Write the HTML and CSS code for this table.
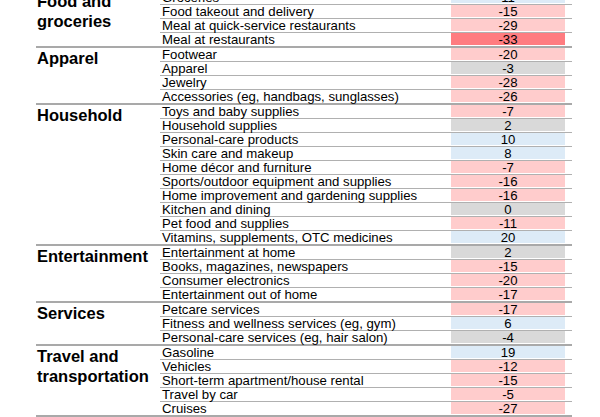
FILE: index.html
```html
<!DOCTYPE html>
<html>
<head>
<meta charset="utf-8">
<link rel="stylesheet" href="styles.css">
</head>
<body>
<div class="table">
  <section class="group">
    <div class="cat">Food and<br>groceries</div>
    <div class="rows">
      <div class="row"><span class="name">Groceries</span><span class="val pos">11</span></div>
      <div class="row"><span class="name">Food takeout and delivery</span><span class="val neg">-15</span></div>
      <div class="row"><span class="name">Meal at quick-service restaurants</span><span class="val neg">-29</span></div>
      <div class="row"><span class="name">Meal at restaurants</span><span class="val strong">-33</span></div>
    </div>
  </section>
  <section class="group">
    <div class="cat">Apparel</div>
    <div class="rows">
      <div class="row"><span class="name">Footwear</span><span class="val neg">-20</span></div>
      <div class="row"><span class="name">Apparel</span><span class="val flat">-3</span></div>
      <div class="row"><span class="name">Jewelry</span><span class="val neg">-28</span></div>
      <div class="row"><span class="name">Accessories (eg, handbags, sunglasses)</span><span class="val neg">-26</span></div>
    </div>
  </section>
  <section class="group">
    <div class="cat">Household</div>
    <div class="rows">
      <div class="row"><span class="name">Toys and baby supplies</span><span class="val neg">-7</span></div>
      <div class="row"><span class="name">Household supplies</span><span class="val flat">2</span></div>
      <div class="row"><span class="name">Personal-care products</span><span class="val pos">10</span></div>
      <div class="row"><span class="name">Skin care and makeup</span><span class="val pos">8</span></div>
      <div class="row"><span class="name">Home décor and furniture</span><span class="val neg">-7</span></div>
      <div class="row"><span class="name">Sports/outdoor equipment and supplies</span><span class="val neg">-16</span></div>
      <div class="row"><span class="name">Home improvement and gardening supplies</span><span class="val neg">-16</span></div>
      <div class="row"><span class="name">Kitchen and dining</span><span class="val flat">0</span></div>
      <div class="row"><span class="name">Pet food and supplies</span><span class="val neg">-11</span></div>
      <div class="row"><span class="name">Vitamins, supplements, OTC medicines</span><span class="val pos">20</span></div>
    </div>
  </section>
  <section class="group">
    <div class="cat">Entertainment</div>
    <div class="rows">
      <div class="row"><span class="name">Entertainment at home</span><span class="val flat">2</span></div>
      <div class="row"><span class="name">Books, magazines, newspapers</span><span class="val neg">-15</span></div>
      <div class="row"><span class="name">Consumer electronics</span><span class="val neg">-20</span></div>
      <div class="row"><span class="name">Entertainment out of home</span><span class="val neg">-17</span></div>
    </div>
  </section>
  <section class="group">
    <div class="cat">Services</div>
    <div class="rows">
      <div class="row"><span class="name">Petcare services</span><span class="val neg">-17</span></div>
      <div class="row"><span class="name">Fitness and wellness services (eg, gym)</span><span class="val pos">6</span></div>
      <div class="row"><span class="name">Personal-care services (eg, hair salon)</span><span class="val flat">-4</span></div>
    </div>
  </section>
  <section class="group">
    <div class="cat">Travel and<br>transportation</div>
    <div class="rows">
      <div class="row"><span class="name">Gasoline</span><span class="val pos">19</span></div>
      <div class="row"><span class="name">Vehicles</span><span class="val neg">-12</span></div>
      <div class="row"><span class="name">Short-term apartment/house rental</span><span class="val neg">-15</span></div>
      <div class="row"><span class="name">Travel by car</span><span class="val neg">-5</span></div>
      <div class="row"><span class="name">Cruises</span><span class="val neg">-27</span></div>
    </div>
  </section>
  <section class="group end"></section>
</div>
</body>
</html>
```

FILE: styles.css
```css
html, body {
  margin: 0;
  padding: 0;
  background: #fff;
}

body {
  font-family: "Liberation Sans", Arial, sans-serif;
  color: #000;
  overflow: hidden;
}

.table {
  margin: -11px 0 0 36px;
  width: 536px;
}

.group {
  display: flex;
  border-top: 2px solid #a9a9a9;
}

.group.end {
  height: 10px;
}

.cat {
  flex: none;
  width: 123px;
  padding: 1px 0 0 1px;
  font-weight: bold;
  font-size: 16.5px;
  line-height: 19.5px;
}

.rows {
  flex: 1;
}

.row {
  display: flex;
  height: 13px;
  font-size: 13.2px;
  line-height: 13px;
  white-space: nowrap;
}

.row + .row {
  border-top: 1px solid #b0b0b0;
}

.name {
  flex: none;
  width: 289px;
  padding-left: 2px;
  overflow: visible;
}

.val {
  flex: none;
  width: 114px;
  height: 12px;
  text-align: center;
}

.pos { background: #ddebf7; }
.neg { background: #ffcccc; }
.strong { background: #ff7c80; }
.flat { background: #d9d9d9; }
```
